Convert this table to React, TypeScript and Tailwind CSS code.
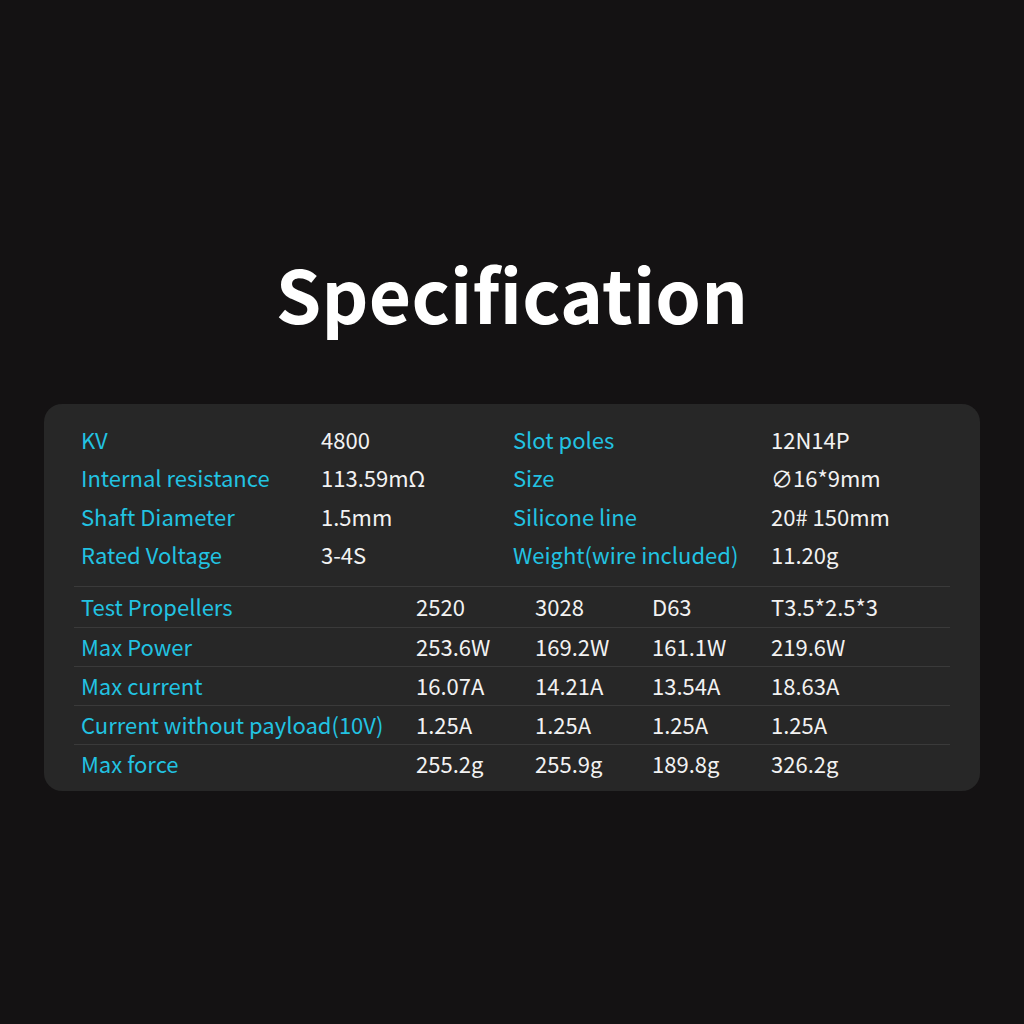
const specs = [
  ['KV', '4800', 'Slot poles', '12N14P'],
  ['Internal resistance', '113.59mΩ', 'Size', '∅16*9mm'],
  ['Shaft Diameter', '1.5mm', 'Silicone line', '20# 150mm'],
  ['Rated Voltage', '3-4S', 'Weight(wire included)', '11.20g'],
];

const tests = [
  ['Test Propellers', '2520', '3028', 'D63', 'T3.5*2.5*3'],
  ['Max Power', '253.6W', '169.2W', '161.1W', '219.6W'],
  ['Max current', '16.07A', '14.21A', '13.54A', '18.63A'],
  ['Current without payload(10V)', '1.25A', '1.25A', '1.25A', '1.25A'],
  ['Max force', '255.2g', '255.9g', '189.8g', '326.2g'],
];

export default function App() {
  return (
    <div
      className="w-[1024px] h-[1024px] bg-[#141213] flex flex-col items-center pt-[248px]"
      style={{ fontFamily: '"Noto Sans CJK SC", "Noto Sans", sans-serif' }}
    >
      <h1 className="text-[73px] font-bold leading-[88px] text-white tracking-[0.2px]">
        Specification
      </h1>

      <div className="mt-[68px] w-[936px] rounded-[18px] bg-[#272727] px-[30px] pt-[16px] pb-[7px] text-[22px]">
        <div>
          {specs.map((r) => (
            <div
              key={r[0]}
              className="grid grid-cols-[240px_192px_258px_1fr] h-[38.5px] items-center pl-[7px]"
            >
              <span className="text-[#22c3e2]">{r[0]}</span>
              <span className="text-[#f2f2f2]">{r[1]}</span>
              <span className="text-[#22c3e2]">{r[2]}</span>
              <span className="text-[#f2f2f2]">{r[3]}</span>
            </div>
          ))}
        </div>

        <div className="mt-[12px] border-t border-[#3a3a3a]">
          {tests.map((r, i) => (
            <div
              key={r[0]}
              className={
                'grid grid-cols-[335px_119px_117px_119px_1fr] items-center pl-[7px] pb-[2px]' +
                (i === 0 ? ' h-[41px]' : ' h-[39px]') +
                (i < tests.length - 1 ? ' border-b border-[#3a3a3a]' : '')
              }
            >
              <span className="text-[#22c3e2]">{r[0]}</span>
              <span className="text-[#f2f2f2]">{r[1]}</span>
              <span className="text-[#f2f2f2]">{r[2]}</span>
              <span className="text-[#f2f2f2]">{r[3]}</span>
              <span className="text-[#f2f2f2]">{r[4]}</span>
            </div>
          ))}
        </div>
      </div>
    </div>
  );
}
